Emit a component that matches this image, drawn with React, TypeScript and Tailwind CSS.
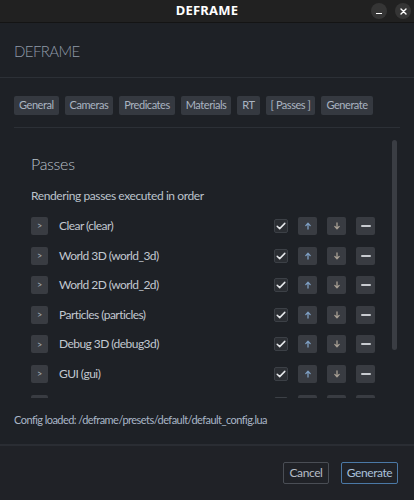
import React from "react";

const tabs = ["General", "Cameras", "Predicates", "Materials", "RT", "[ Passes ]", "Generate"];

const passes = [
  "Clear (clear)",
  "World 3D (world_3d)",
  "World 2D (world_2d)",
  "Particles (particles)",
  "Debug 3D (debug3d)",
  "GUI (gui)",
  "",
];

function ArrowUp() {
  return (
    <svg width="8" height="8" viewBox="0 0 8 8" fill="none">
      <path d="M4 7V1.5M1.8 3.6L4 1.3l2.2 2.3" stroke="#7d9ec2" strokeWidth="1.3" strokeLinecap="round" strokeLinejoin="round" />
    </svg>
  );
}

function ArrowDown() {
  return (
    <svg width="8" height="8" viewBox="0 0 8 8" fill="none">
      <path d="M4 1v5.5M1.8 4.4L4 6.7l2.2-2.3" stroke="#a79f94" strokeWidth="1.3" strokeLinecap="round" strokeLinejoin="round" />
    </svg>
  );
}

function Check() {
  return (
    <svg width="10" height="8" viewBox="0 0 10 8" fill="none">
      <path d="M1.2 4.2l2.5 2.4L8.8 1.4" stroke="#e6e8eb" strokeWidth="1.5" strokeLinecap="round" strokeLinejoin="round" />
    </svg>
  );
}

function PassRow({ label }: { label: string }) {
  return (
    <div className="flex items-center h-[18px] shrink-0">
      <div className="w-[17px] h-[18px] bg-[#393c42] rounded-[2px] flex items-center justify-center text-[9px] text-[#aab0b8]">{label ? ">" : ""}</div>
      <span className="ml-[11px] text-[12px] tracking-[-0.55px] text-[#c2c8d0] flex-1 whitespace-nowrap">{label}</span>
      <div className="w-[14px] h-[14px] bg-[#2b2e33] border border-[#3c4046] rounded-[2px] flex items-center justify-center">
        <Check />
      </div>
      <div className="ml-[10px] w-[19px] h-[18px] bg-[#393c42] rounded-[2px] flex items-center justify-center"><ArrowUp /></div>
      <div className="ml-[10px] w-[19px] h-[18px] bg-[#393c42] rounded-[2px] flex items-center justify-center"><ArrowDown /></div>
      <div className="ml-[10px] w-[19px] h-[18px] bg-[#393c42] rounded-[2px] flex items-center justify-center">
        <div className="w-[10px] h-[2px] bg-[#c9ccd1] rounded-full" />
      </div>
    </div>
  );
}

export default function App() {
  return (
    <div className="w-[414px] h-[500px] bg-[#1e2126] flex flex-col overflow-hidden" style={{ fontFamily: "Lato, 'Noto Sans', sans-serif" }}>
      {/* title bar */}
      <div className="h-[23px] bg-[#212121] border-b border-[#141414] flex items-center justify-center relative shrink-0">
        <span className="text-[13px] font-bold text-white tracking-[0.2px]" style={{ fontFamily: "'Noto Sans', sans-serif" }}>DEFRAME</span>
        <div className="absolute right-[3px] top-[3px] flex gap-[8px]">
          <div className="w-[16px] h-[16px] rounded-full bg-[#353535] flex items-end justify-center pb-[5px]">
            <div className="w-[6px] h-[1.5px] bg-white" />
          </div>
          <div className="w-[16px] h-[16px] rounded-full bg-[#353535] flex items-center justify-center">
            <svg width="7" height="7" viewBox="0 0 7 7"><path d="M1 1l5 5M6 1L1 6" stroke="#fff" strokeWidth="1.4" strokeLinecap="round" /></svg>
          </div>
        </div>
      </div>

      {/* header */}
      <div className="h-[55px] border-b border-[#2c3036] flex items-center px-[14px] shrink-0">
        <span className="text-[15px] tracking-[-0.6px] text-[#8f9aa8] font-light pt-[2px]">DEFRAME</span>
      </div>

      {/* tabs */}
      <div className="flex gap-[6px] px-[14px] pt-[18px] shrink-0">
        {tabs.map((t) => (
          <div key={t} className="h-[19px] px-[5px] bg-[#353940] rounded-[2px] flex items-center text-[11px] tracking-[-0.45px] text-[#aab4c1] whitespace-nowrap">{t}</div>
        ))}
      </div>

      {/* content panel */}
      <div className="mt-[12px] mx-[14px] border-t border-[#2c3036] h-[271px] relative overflow-hidden shrink-0">
        <div className="pl-[17px] pr-[25px] pt-[24px] flex flex-col">
          <div className="text-[16px] tracking-[-0.3px] text-[#b9c0c9] font-light leading-[24px]">Passes</div>
          <div className="mt-[13px] text-[12px] tracking-[-0.4px] text-[#bcc3cc] leading-[14px]">Rendering passes executed in order</div>
          <div className="mt-[14px] flex flex-col gap-[11.6px]">
            {passes.map((p, i) => (
              <PassRow key={i} label={p} />
            ))}
          </div>
        </div>
        <div className="absolute right-[3px] top-[12px] w-[5px] h-[210px] bg-[#3a3d43] rounded-full" />
      </div>

      {/* status */}
      <div className="px-[14px] pt-[14px] text-[11px] tracking-[-0.55px] text-[#a9b6c6] shrink-0 whitespace-nowrap">Config loaded: /deframe/presets/default/default_config.lua</div>

      {/* footer */}
      <div className="mt-auto h-[56px] border-t-2 border-[#2a2d33] bg-[#202227] flex items-center justify-end gap-[12px] pr-[16px] shrink-0">
        <div className="h-[22px] w-[46px] border border-[#4a4e55] rounded-[2px] flex items-center justify-center text-[12px] tracking-[-0.4px] text-[#b5bcc5]">Cancel</div>
        <div className="h-[22px] w-[57px] border border-[#4b79a6] rounded-[2px] flex items-center justify-center text-[12px] tracking-[-0.4px] text-[#a9c1da]">Generate</div>
      </div>
    </div>
  );
}
